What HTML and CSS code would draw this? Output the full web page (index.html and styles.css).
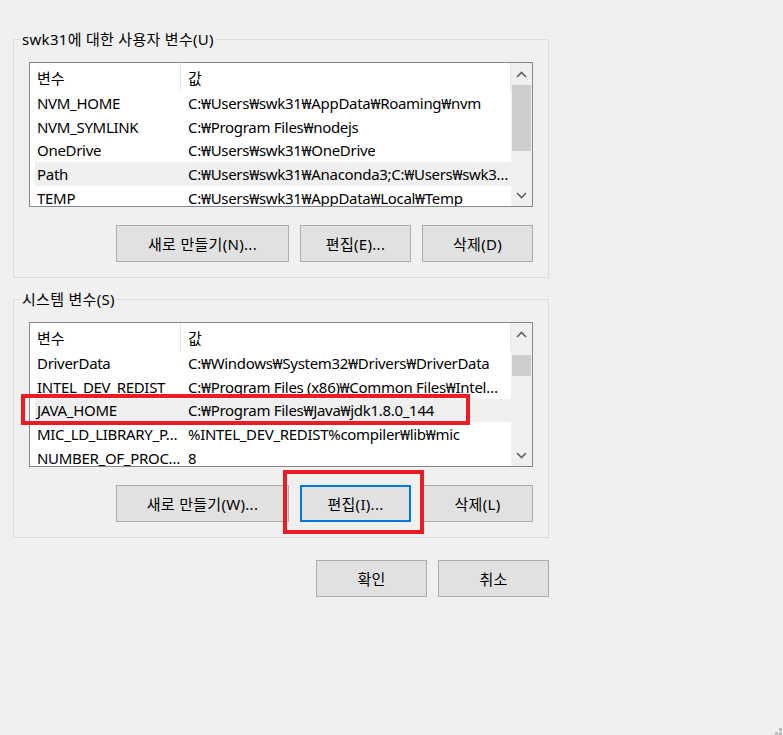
FILE: index.html
```html
<!DOCTYPE html>
<html lang="ko">
<head>
    <meta charset="UTF-8">
    <title>환경 변수</title>
    <link rel="stylesheet" href="styles.css">
</head>
<body>
<div class="page">
    <fieldset class="group">
        <legend class="group-title">swk31에 대한 사용자 변수(U)</legend>
        <div class="list">
            <div class="list-body">
                <div class="list-head">
                    <span class="head-name">변수</span>
                    <span class="head-value">값</span>
                </div>
                <div class="row"><span class="cell-name">NVM_HOME</span><span class="cell-value">C:₩Users₩swk31₩AppData₩Roaming₩nvm</span></div>
                <div class="row"><span class="cell-name">NVM_SYMLINK</span><span class="cell-value">C:₩Program Files₩nodejs</span></div>
                <div class="row"><span class="cell-name">OneDrive</span><span class="cell-value">C:₩Users₩swk31₩OneDrive</span></div>
                <div class="row row-hover"><span class="cell-name">Path</span><span class="cell-value">C:₩Users₩swk31₩Anaconda3;C:₩Users₩swk3…</span></div>
                <div class="row"><span class="cell-name">TEMP</span><span class="cell-value">C:₩Users₩swk31₩AppData₩Local₩Temp</span></div>
            </div>
            <div class="scrollbar">
                <div class="scroll-arrow">
                    <svg width="11" height="7" viewBox="0 0 11 7"><polyline points="1,6 5.5,1.5 10,6" fill="none" stroke="#606060" stroke-width="1.6"/></svg>
                </div>
                <div class="scroll-track">
                    <span class="scroll-thumb thumb-user"></span>
                </div>
                <div class="scroll-arrow">
                    <svg width="11" height="7" viewBox="0 0 11 7"><polyline points="1,1 5.5,5.5 10,1" fill="none" stroke="#606060" stroke-width="1.6"/></svg>
                </div>
            </div>
        </div>
        <div class="btn-row">
            <button class="btn btn-wide">새로 만들기(N)...</button>
            <button class="btn">편집(E)...</button>
            <button class="btn">삭제(D)</button>
        </div>
    </fieldset>

    <fieldset class="group group-system">
        <legend class="group-title">시스템 변수(S)</legend>
        <div class="list">
            <div class="list-body">
                <div class="list-head">
                    <span class="head-name">변수</span>
                    <span class="head-value">값</span>
                </div>
                <div class="row"><span class="cell-name">DriverData</span><span class="cell-value">C:₩Windows₩System32₩Drivers₩DriverData</span></div>
                <div class="row"><span class="cell-name">INTEL_DEV_REDIST</span><span class="cell-value">C:₩Program Files (x86)₩Common Files₩Intel…</span></div>
                <div class="row row-hover"><span class="cell-name">JAVA_HOME</span><span class="cell-value">C:₩Program Files₩Java₩jdk1.8.0_144</span></div>
                <div class="row"><span class="cell-name">MIC_LD_LIBRARY_P…</span><span class="cell-value">%INTEL_DEV_REDIST%compiler₩lib₩mic</span></div>
                <div class="row"><span class="cell-name">NUMBER_OF_PROC…</span><span class="cell-value">8</span></div>
            </div>
            <div class="scrollbar">
                <div class="scroll-arrow">
                    <svg width="11" height="7" viewBox="0 0 11 7"><polyline points="1,6 5.5,1.5 10,6" fill="none" stroke="#606060" stroke-width="1.6"/></svg>
                </div>
                <div class="scroll-track">
                    <span class="scroll-thumb thumb-system"></span>
                </div>
                <div class="scroll-arrow">
                    <svg width="11" height="7" viewBox="0 0 11 7"><polyline points="1,1 5.5,5.5 10,1" fill="none" stroke="#606060" stroke-width="1.6"/></svg>
                </div>
            </div>
        </div>
        <div class="btn-row">
            <button class="btn btn-wide">새로 만들기(W)...</button>
            <button class="btn btn-focus">편집(I)...</button>
            <button class="btn">삭제(L)</button>
        </div>
    </fieldset>

    <div class="dialog-buttons">
        <button class="btn">확인</button>
        <button class="btn">취소</button>
    </div>

    <!-- 빨간 표시 -->
    <span class="mark mark-row"></span>
    <span class="mark mark-btn"></span>

    <span class="grip"><i></i><i></i><i></i></span>
</div>
</body>
</html>
```

FILE: styles.css
```css
*{
    box-sizing: border-box;
}
html,body{
    margin: 0;
    padding: 0;
    height: 100%;
    overflow: hidden;
}
body{
    background: #f0f0f0;
    color: #000;
    font-family: "Noto Sans", "Noto Sans CJK KR", sans-serif;
    font-size: 15px;
}
.page{
    position: relative;
    height: 100%;
    padding: 29px 0 0 13px;
}
.group{
    width: 536px;
    min-width: 0;
    margin: 0;
    padding: 0 15px 15px 15px;
    border: 1px solid #dcdcdc;
}
.group-system{
    margin-top: 11px;
}
.group-title{
    margin-left: -9px;
    padding: 0 2px;
    line-height: 20px;
    height: 20px;
    letter-spacing: 0.3px;
}
.list{
    display: flex;
    width: 504px;
    height: 145px;
    margin-top: 13px;
    border: 1px solid #828790;
    background: #fff;
    overflow: hidden;
}
.list-body{
    flex: 1;
    min-width: 0;
}
.list-head{
    display: flex;
    height: 28px;
    align-items: center;
    border-right: 1px solid #e5e5e5;
}
.head-name{
    width: 151px;
    height: 100%;
    display: flex;
    align-items: center;
    padding-left: 7px;
    border-right: 1px solid #e5e5e5;
}
.head-value{
    padding-left: 7px;
}
.row{
    display: flex;
    align-items: center;
    height: 23.75px;
    margin-left: 5px;
    white-space: nowrap;
    letter-spacing: -0.3px;
}
.row-hover{
    background: #efefef;
}
.cell-name{
    width: 146px;
    flex: none;
    padding-left: 2px;
    overflow: hidden;
}
.cell-value{
    padding-left: 7px;
    overflow: hidden;
    text-overflow: ellipsis;
}
.scrollbar{
    width: 21px;
    flex: none;
    display: flex;
    flex-direction: column;
    background: #f0f0f0;
}
.scroll-arrow{
    height: 22px;
    display: flex;
    align-items: center;
    justify-content: center;
}
.scroll-arrow svg{
    display: block;
}
.scroll-track{
    flex: 1;
    padding: 0 1px;
}
.scroll-thumb{
    display: block;
    background: #cdcdcd;
}
.thumb-user{
    height: 66px;
}
.thumb-system{
    height: 21px;
    margin-top: 10px;
}
.btn-row{
    display: flex;
    justify-content: flex-end;
    gap: 11px;
    margin-top: 18px;
}
.btn{
    width: 111px;
    height: 37px;
    margin: 0;
    padding: 0;
    border: 1px solid #adadad;
    background: #e1e1e1;
    color: #000;
    font-family: inherit;
    font-size: 15px;
    letter-spacing: 0.3px;
}
.btn-wide{
    width: 173px;
}
.btn-focus{
    border: 2px solid #0078d7;
}
.dialog-buttons{
    display: flex;
    justify-content: flex-end;
    gap: 11px;
    width: 536px;
    margin-top: 22px;
}
.mark{
    position: absolute;
    border: 4px solid #ed1c24;
}
.mark-row{
    left: 21px;
    top: 394px;
    width: 449px;
    height: 31px;
}
.mark-btn{
    left: 283px;
    top: 470px;
    width: 141px;
    height: 64px;
}
.grip{
    position: absolute;
    right: 0;
    bottom: 0;
    width: 8px;
    height: 7px;
}
.grip i{
    position: absolute;
    width: 3px;
    height: 3px;
    background: #bcbcbc;
}
.grip i:nth-child(1){
    right: 1px;
    top: 0;
}
.grip i:nth-child(2){
    right: 1px;
    bottom: 0;
}
.grip i:nth-child(3){
    right: 5px;
    bottom: 0;
}
```
